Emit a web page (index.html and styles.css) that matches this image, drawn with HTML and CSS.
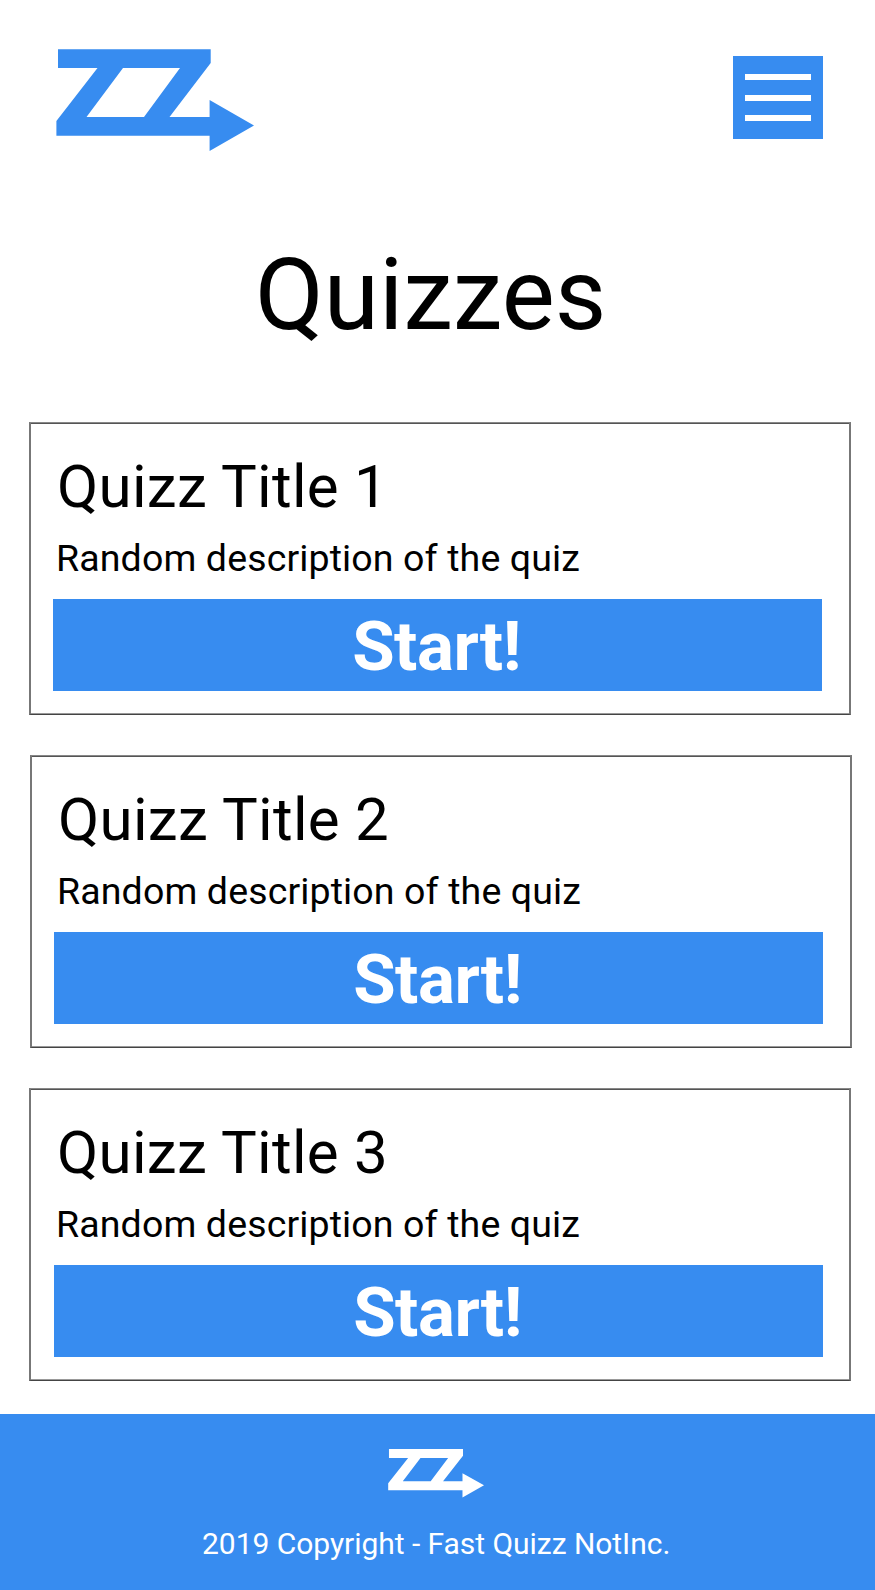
FILE: index.html
```html
<!DOCTYPE html>
<html lang="en">
<head>
<meta charset="utf-8">
<title>Quizzes</title>
<link rel="stylesheet" href="styles.css">
</head>
<body>
<header class="header">
  <svg class="logo" viewBox="56 49 199 103" role="img" aria-label="Fast Quizz"><path fill-rule="evenodd" d="M58 49.2H210.7V63L169.5 117H209.6V100L254 125.4L209.6 151V135.7H56.4V121L97.5 68H58ZM123 68L86.5 117H144L180 68Z"/></svg>
  <button class="menu" aria-label="Menu"><span></span><span></span><span></span></button>
</header>
<main>
  <h1 class="heading">Quizzes</h1>
  <section class="list">
    <article class="card">
      <h2 class="title">Quizz Title 1</h2>
      <p class="desc">Random description of the quiz</p>
      <button class="start">Start!</button>
    </article>
    <article class="card shifted">
      <h2 class="title">Quizz Title 2</h2>
      <p class="desc">Random description of the quiz</p>
      <button class="start">Start!</button>
    </article>
    <article class="card last">
      <h2 class="title">Quizz Title 3</h2>
      <p class="desc">Random description of the quiz</p>
      <button class="start">Start!</button>
    </article>
  </section>
</main>
<footer class="footer">
  <svg class="footer-logo" viewBox="56 49 199 103" preserveAspectRatio="none" aria-hidden="true"><path fill-rule="evenodd" d="M58 49.2H210.7V63L169.5 117H209.6V100L254 125.4L209.6 151V135.7H56.4V121L97.5 68H58ZM123 68L86.5 117H144L180 68Z"/></svg>
  <p class="copyright">2019 Copyright - Fast Quizz NotInc.</p>
</footer>
</body>
</html>
```
FILE: styles.css
```css
* { box-sizing: border-box; }
body {
  margin: 0;
  height: 1590px;
  display: flex;
  flex-direction: column;
  background: #fff;
  color: #000;
  font-family: Roboto, sans-serif;
}
h1, h2, p { margin: 0; font-weight: 400; white-space: nowrap; }
button { border: 0; padding: 0; font-family: inherit; }
.header {
  height: 152px;
  padding: 49px 52px 0 56px;
  display: flex;
  justify-content: space-between;
}
.logo { width: 199px; height: 103px; fill: #378cf0; }
.menu {
  width: 90px;
  height: 83px;
  margin-top: 7px;
  padding: 18px 12px;
  display: flex;
  flex-direction: column;
  justify-content: space-between;
  background: #378cf0;
}
.menu span { height: 6px; background: #fff; }
.heading {
  margin-top: 84px;
  padding-left: 255px;
  font-size: 100px;
  line-height: 118px;
}
.list {
  margin-top: 68px;
  padding-left: 29px;
  display: flex;
  flex-direction: column;
  gap: 40px;
}
.card {
  width: 822px;
  height: 293px;
  padding: 29px 26px 0 22px;
  border: solid;
  border-width: 1px 2px;
  border-color: #888 #777 #444;
  box-shadow: inset 0 1px #555, inset 0 -1px #999;
}
.shifted { margin-left: 1px; }
.title { padding-left: 4px; font-size: 60px; line-height: 70px; letter-spacing: 0.3px; }
.desc { padding-left: 3px; margin-top: 14px; font-size: 37.5px; line-height: 44px; letter-spacing: 0.13px; }
.start {
  display: block;
  width: 769px;
  height: 92px;
  margin-top: 19px;
  padding: 4px 2px 0 0;
  background: #378cf0;
  color: #fff;
  font-size: 69px;
  font-weight: 700;
  letter-spacing: -0.5px;
  line-height: 88px;
}
.last .start { margin-left: 1px; }
.footer {
  height: 176px;
  margin-top: auto;
  padding-top: 35px;
  background: #378cf0;
  color: #fff;
}
.footer-logo { display: block; width: 96.5px; height: 49px; margin-left: 388px; fill: #fff; }
.copyright { margin-top: 28px; padding-left: 202px; font-size: 30px; line-height: 36px; letter-spacing: -0.04px; }
```
